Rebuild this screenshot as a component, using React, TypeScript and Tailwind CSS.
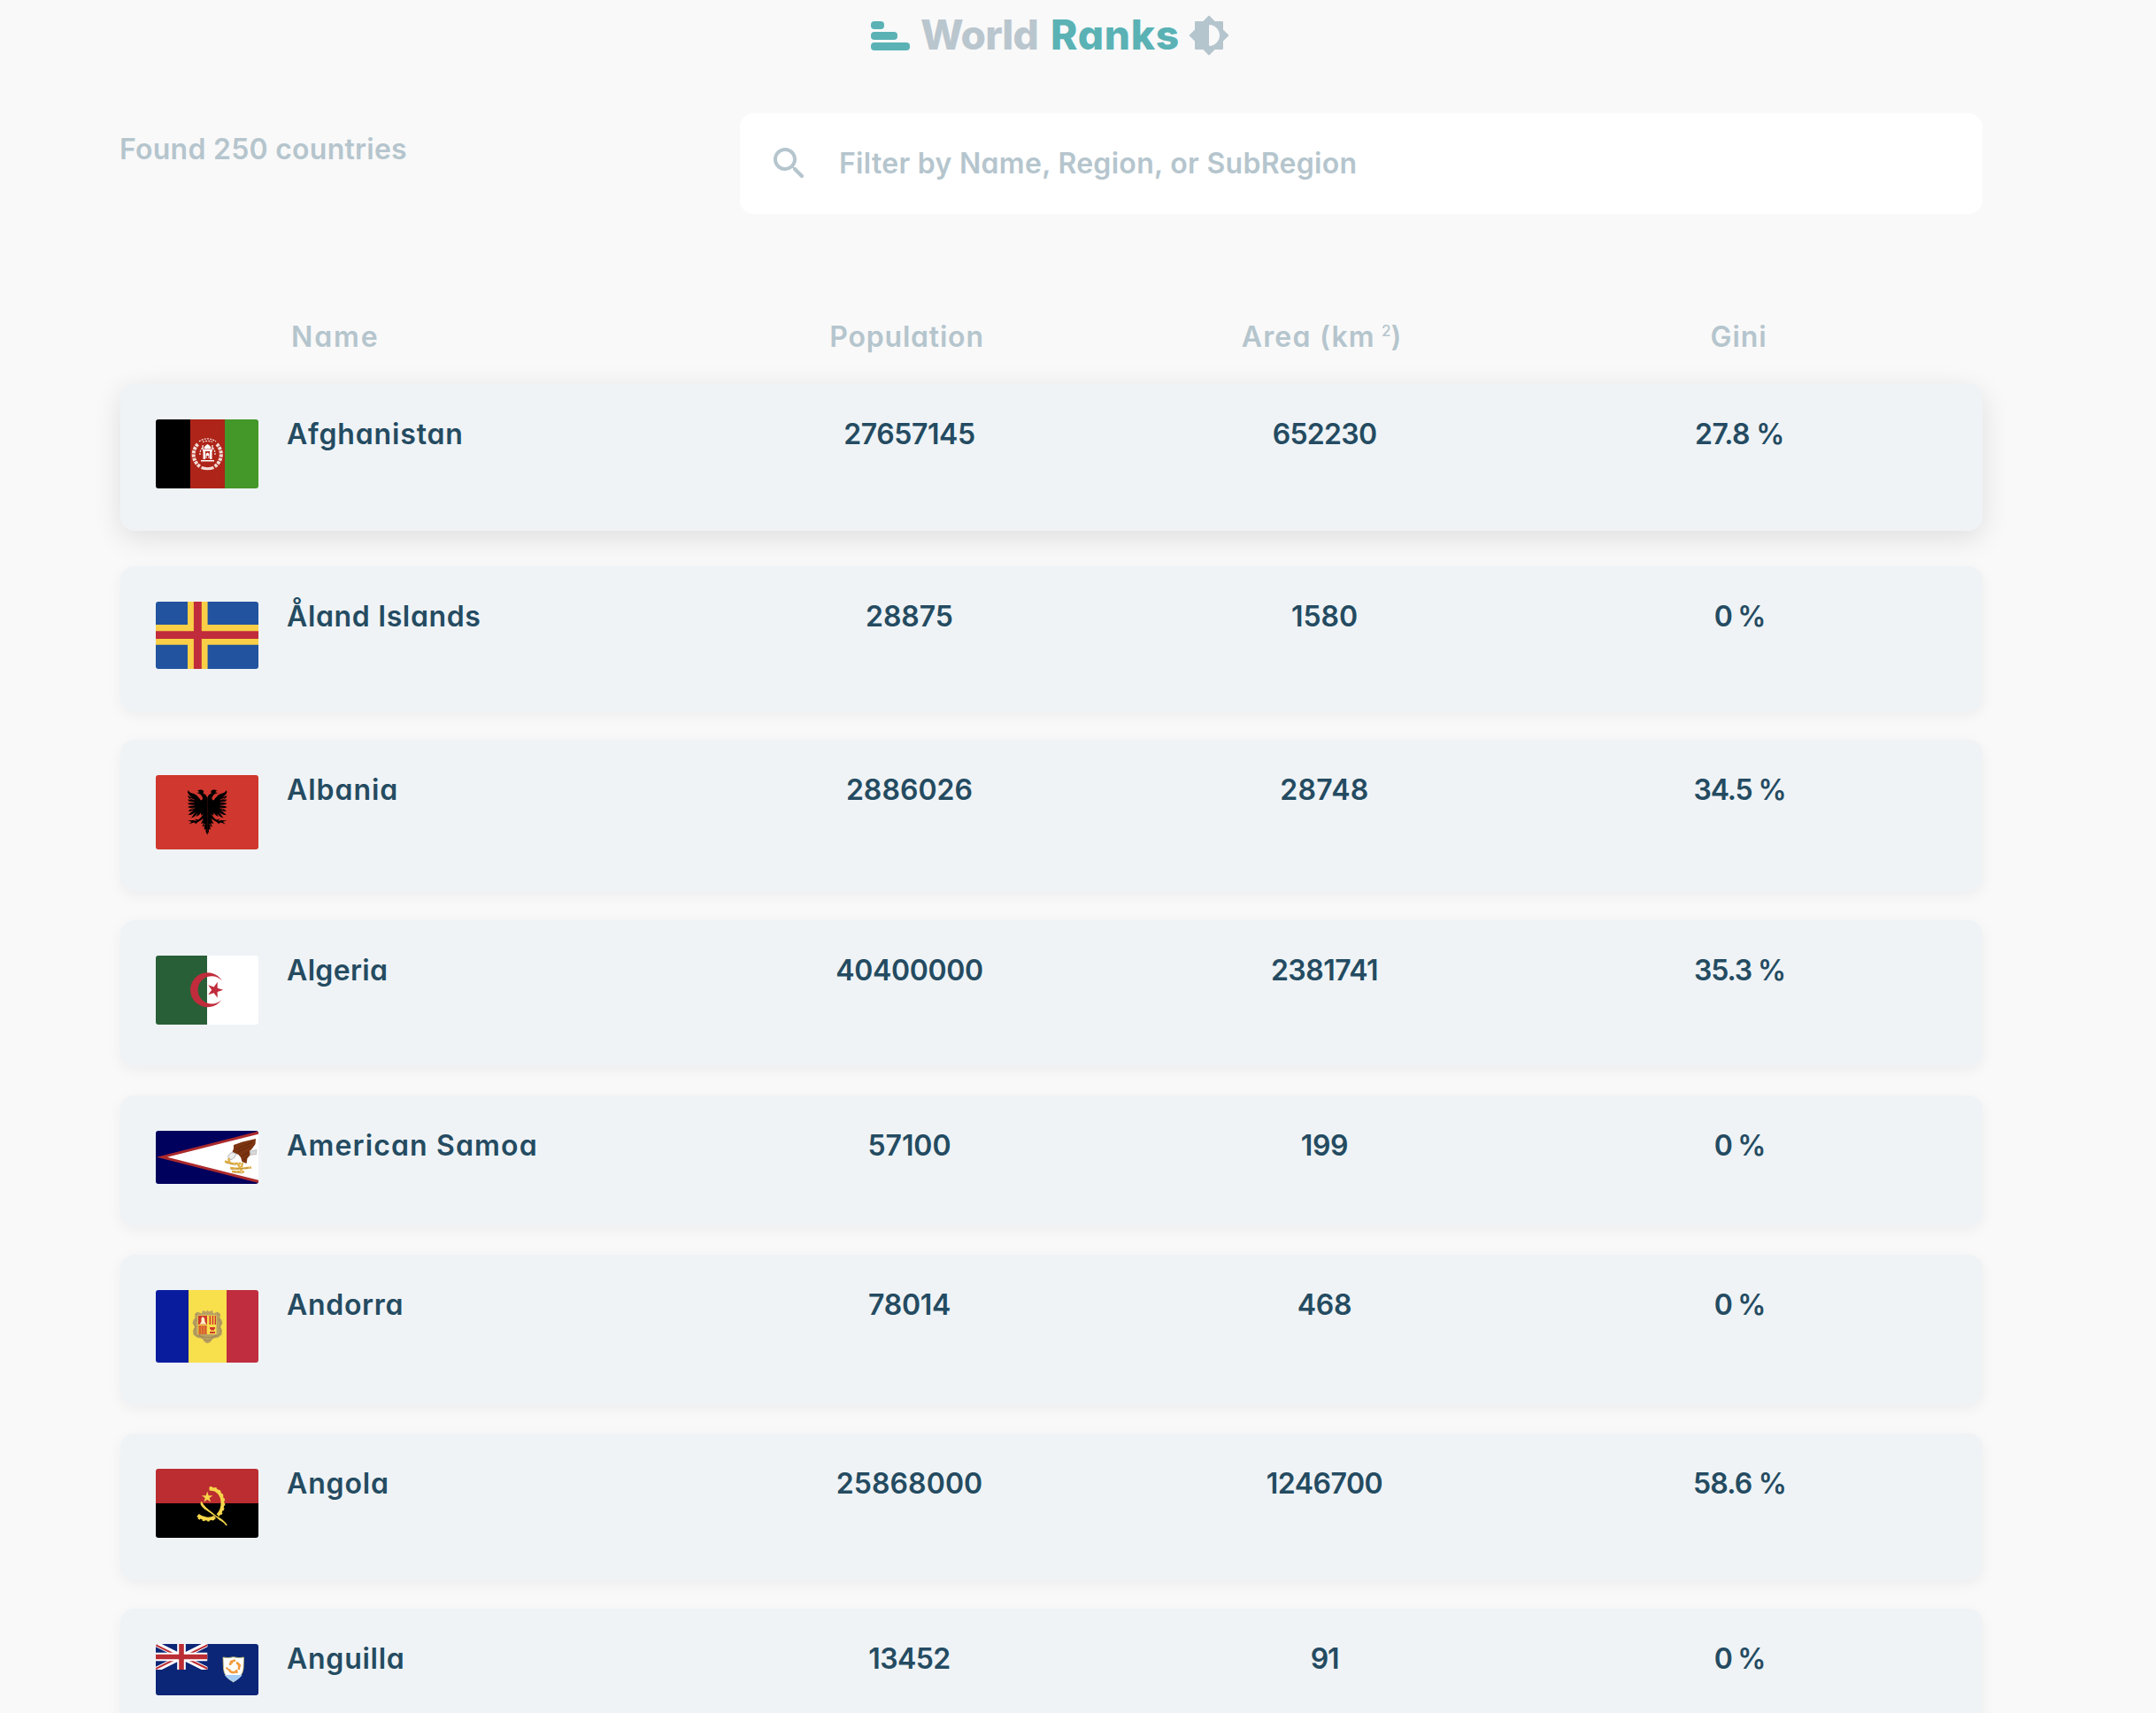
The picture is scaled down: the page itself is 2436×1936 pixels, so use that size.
import type { ReactNode } from "react";

type Country = {
  name: string;
  nameTracking: string;
  population: string;
  populationTracking: string;
  area: string;
  areaTracking: string;
  gini: string;
  giniTracking: string;
  flagHeight: number;
  flag: ReactNode;
  raised?: boolean;
};

const starPoints = (cx: number, cy: number, r: number, inner: number, start: number) =>
  Array.from({ length: 10 }, (_, i) => {
    const a = start + (i * Math.PI) / 5;
    const d = i % 2 ? inner : r;
    return `${(cx + d * Math.cos(a)).toFixed(2)},${(cy + d * Math.sin(a)).toFixed(2)}`;
  }).join(" ");

const Afghanistan = (
  <>
    <path fill="#000" d="M0 0h39v78H0z" />
    <path fill="#ae2419" d="M39 0h39v78H39z" />
    <path fill="#449729" d="M78 0h38v78H78z" />
    <g fill="none" stroke="#f3dcd6">
      <path strokeWidth="4" strokeDasharray="3.2 1" d="M47.500 28a15.500 16 0 0 0 3 25.500M69 28a15.500 16 0 0 1-3 25.500" />
      <path strokeWidth="1.300" strokeDasharray="2 1.200" d="M49 25a16 16 0 0 1 19 0M53 25.500a14 14 0 0 1 11 0M50 40a9 9 0 0 1 3-8M67 40a9 9 0 0 0-3-8" />
      <path strokeWidth="3.200" d="M51.500 54.500q7 2.500 14 0" />
    </g>
    <g fill="#fff">
      <path d="M58.500 28c-3 2-4 3-4 5.500h8c0-2.500-1-3.500-4-5.500zM53 34h11v2H53zM53.500 36h2.500v9h-2.500zM61 36h2.500v9H61zM51 46h15v1.500H51z" />
      <path d="M56.500 44v-5q2-3 4 0v5h-1v-3h-2v3z" />
      <path d="M52.500 29h1.200v5h-1.200zM63.400 29h1.200v5h-1.200z" />
    </g>
  </>
);

const Aland = (
  <>
    <path fill="#22539f" d="M0 0h116v76H0z" />
    <path fill="#f8cf46" d="M36 0h22.600v76H36zM0 26h116v22.700H0z" />
    <path fill="#c02c3b" d="M42.900 0h8.900v76h-8.900zM0 33.300h116v8.800H0z" />
  </>
);

const eagleHalf =
  "M58.200 26 C57 22 55 21 53 20.800 C54.500 19.500 54.500 18.500 53.500 17.500 C52 16 49 16 47 18 C48.500 18 49 18.500 49 19.500 L46 20 C48 20.500 50 21 51 22.500 C53 25 54 27 51.500 28.500 C50 28 50 26.500 48 25 C46 22 43 21 41 20.500 C39 20 37.500 19 36.500 17 L36 19.500 C37 22 38.500 23.500 41 25 C39 24.500 37.500 24 36 23 C36.500 25.500 38 27 41 28 L36 27.500 C37 29.500 38.500 30.500 41.500 31 L36 31.800 C37 33.500 39 34 42 33.700 L36 36 C37.500 37.500 40 37.500 42.500 36.500 L36.500 40.500 C39 41.500 41.500 40.500 43.500 39 L36.500 45 C40.500 45.500 43 43.500 45 41.500 L40 48.500 C44 47.500 46 45 47.500 42.500 L45.500 47 C48 46.500 49.500 44.500 51 42.500 L51 45.500 L53.500 44 C52.500 46.500 50 49 48 50.500 L44 49.500 L46.500 51.800 L42 51 L36 51.500 L40.500 52.800 L37.500 55.500 L43 53.500 L45.500 55 L47.500 53 C50 52 52 50 54 49 L51 55 L54 54 L52.500 58.500 L55.200 57.500 L54.500 61.500 L56.500 61 L56.500 64 L58.200 67.500 Z";

const Albania = (
  <>
    <path fill="#d0372e" d="M0 0h116v84H0z" />
    <path d={eagleHalf} />
    <path d={eagleHalf} transform="matrix(-1 0 0 1 116.400 0)" />
    <path fill="none" stroke="#d0372e" strokeWidth=".8" d="M39 26l4.500 2M39 30l4.500 1M39 34.500l4.500-.5M40 39l4-2M73 28l4.500-2M73 31l4.500-1M73 34l4.500.500M72.500 37l4 2M54 57l2-2M62.500 57l-2-2" />
  </>
);

const Algeria = (
  <>
    <path fill="#295f37" d="M0 0h58v78H0z" />
    <path fill="#fff" d="M58 0h58v78H58z" />
    <path fill="#c02c3b" d="M75.300 28.800A19.500 19.500 0 1 0 74.600 49.700A15.700 15.700 0 1 1 75.300 28.800z" />
    <polygon fill="#c02c3b" points={starPoints(66.8, 38.8, 9.4, 3.6, 0)} />
  </>
);

const AmericanSamoa = (
  <>
    <path fill="#00005d" d="M0 0h116v60H0z" />
    <path fill="#ac2a2c" d="M1 29.700 116 .500v58.500z" />
    <path fill="#fff" d="M13 29.700 116 3.800v52z" />
    <path fill="#7d3410" d="M88 16l10-3.500L113 9l-.5 6-3.500 5-3 3 1 4-3.500 4-1 6-5-2-1.500-5-2.500-3-7-3 1.500-4z" />
    <path fill="none" stroke="#55210a" strokeWidth=".7" d="M91 21l18-8M93 24l14-7M97 29l8-5M99 33l5-4" />
    <path fill="#d9d9d9" stroke="#999" strokeWidth=".5" d="M107 23l7-1.500-.5 5-7 1z" />
    <path fill="#eee" stroke="#888" strokeWidth=".6" d="M87.500 24.500c-3 0-5 2-6 5l2 1.500 1.500 2 4-3 2-4z" />
    <path fill="none" stroke="#dfae44" strokeWidth="2.400" strokeDasharray="5 .4" d="M78 34.500l8 2.500 10 0M82 31l2 6M84 42l10 1 14-1.500M86 46l14 .500M98 36l-1 5M93 38l4 7" />
    <path fill="none" stroke="#9b7426" strokeWidth=".5" d="M79 36l12 3M85 43.500l20-1.500M88 47l10 1" />
  </>
);

const Andorra = (
  <>
    <path fill="#0a1c9e" d="M0 0h37v82H0z" />
    <path fill="#f8df4c" d="M37 0h43v82H37z" />
    <path fill="#bf2d3f" d="M80 0h36v82H80z" />
    <path fill="#b9a163" d="M53 23l4 1.500 1.500-2 1.500 2 4-1.500 1 3.500 5-2 3 2.500-1.500 4 3 2.500 1 4-2.500 4 2 4-.5 5-4 3-6 1.500-3 4-3 1.200-3-1.200-3-4-6-1.500-4-3-.5-5 2-4-2.500-4 1-4 3-2.500-1.500-4 3-2.500 5 2z" />
    <path fill="none" stroke="#826d3d" strokeWidth=".7" strokeDasharray="1.500 1" d="M46 27q-3 3 0 7-4 4-1 8-3 7 2 10 5 0 8 4 3 2 7 0 3-4 8-4 5-3 2-10 3-4-1-8 3-4 0-7M49 51q10 5 20 0" />
    <path fill="#f8df4c" d="M47.500 28.500h21V50h-21z" />
    <path fill="#cf3a2c" d="M48 29h10v10H48zM60.500 29h1.600v10h-1.600zM63.600 29h1.600v10h-1.600zM66.600 29h1.400v10h-1.400z" />
    <path fill="#e08a34" d="M48 40h10v10H48z" />
    <path fill="#cf3a2c" d="M49.500 40h1v10h-1zM52.500 40h1v10h-1zM55.500 40h1v10h-1zM61 42h6v2h-1v1.500h-4V44h-1zM61 47h6v2h-6z" />
    <path fill="#fff4c8" d="M53 30l2 2 .5 4 2 2.500h-8L51.500 36v-4z" />
  </>
);

const Angola = (
  <>
    <path fill="#bb2d30" d="M0 0h116v39H0z" />
    <path d="M0 39h116v39H0z" />
    <g fill="none" stroke="#f6d64b">
      <path strokeWidth="3.800" d="M60.500 23C69 21.500 75.500 29 75.500 38.500C75.500 44 73.500 49 70 52.500M67 54.500C61 58 53 57 47.500 52.500" />
      <path strokeWidth="2.200" strokeDasharray="2.600 2.800" d="M61 21.300C70 20 77.200 29 77.200 38.500C77.200 45 75 50 71 54M66 56.700C60 59.300 52 58.800 47 54.800" />
    </g>
    <path fill="#f6d64b" d="M51 37c1.500 0 1.500 1.500 3 3.500 3.500 4.500 9 8 13.500 12 2 1.500 4 2.500 6.500 4 2.500 2 5.500 4.500 7 7.500h-2c-1-2.500-4-4.500-7-6-3-3-6-5-9.500-7.500-5-3.500-10-6-12-10.500z" />
    <path fill="none" stroke="#7b6a20" strokeWidth=".7" d="M62 50.500l8 5.500" />
    <polygon fill="#f6d64b" points={starPoints(58.2, 32.2, 6.6, 2.5, -Math.PI / 2)} />
  </>
);

const Anguilla = (
  <>
    <path fill="#0b2577" d="M0 0h116v58H0z" />
    <svg width="58.500" height="29" viewBox="0 0 58.500 29">
      <path stroke="#fff" strokeWidth="6" d="M0 0l58.500 29M58.500 0L0 29" />
      <path stroke="#bb2d34" strokeWidth="2" d="M0 1.200l29 14.500M58.500 1.200L29 15.700M0 28l29-14.500M58.500 28L29 13.500" />
      <path stroke="#fff" strokeWidth="9.600" d="M29 0v29M0 14.500h58.500" />
      <path stroke="#bb2d34" strokeWidth="5.600" d="M29 0v29M0 14.500h58.500" />
    </svg>
    <path fill="#fff" stroke="#c9c26a" strokeWidth=".8" d="M76 15q6 1.500 11.700-.3Q94 16.500 99.500 15l-.5 13q-1 9-11.300 15Q77 37 76.500 28z" />
    <path fill="#a6cdf5" d="M77.800 35h19.800q-3 5-9.900 7.700Q81 40 77.800 35z" />
    <g fill="none" stroke="#f29a3c" strokeWidth="2.600">
      <path d="M84 24q0-5 6-5.500M91 21q5 2 2.500 8M92 30q-4 4.500-9 0" />
      <path strokeWidth="1.800" d="M79.500 26.500q2 3 5 3M84.500 19l2 3M94 23l2 2M91 29l1 4" />
    </g>
  </>
);

const countries: Country[] = [
  { name: "Afghanistan", nameTracking: "tracking-[0.850px]", population: "27657145", populationTracking: "tracking-[-0.450px]", area: "652230", areaTracking: "tracking-[-0.700px]", gini: "27.8 %", giniTracking: "tracking-[-0.600px]", flagHeight: 78, flag: Afghanistan, raised: true },
  { name: "Åland Islands", nameTracking: "tracking-[0.650px]", population: "28875", populationTracking: "tracking-[-0.050px]", area: "1580", areaTracking: "tracking-[-0.050px]", gini: "0 %", giniTracking: "tracking-[-1.300px]", flagHeight: 76, flag: Aland },
  { name: "Albania", nameTracking: "tracking-[0.950px]", population: "2886026", populationTracking: "tracking-[0.050px]", area: "28748", areaTracking: "tracking-[0.300px]", gini: "34.5 %", giniTracking: "tracking-[-1.150px]", flagHeight: 84, flag: Albania },
  { name: "Algeria", nameTracking: "tracking-[0.350px]", population: "40400000", populationTracking: "tracking-[-0.350px]", area: "2381741", areaTracking: "tracking-[-0.500px]", gini: "35.3 %", giniTracking: "tracking-[-1.150px]", flagHeight: 78, flag: Algeria },
  { name: "American Samoa", nameTracking: "tracking-[1.150px]", population: "57100", populationTracking: "tracking-[-0.100px]", area: "199", areaTracking: "tracking-[-0.400px]", gini: "0 %", giniTracking: "tracking-[-1.300px]", flagHeight: 60, flag: AmericanSamoa },
  { name: "Andorra", nameTracking: "tracking-[0.700px]", population: "78014", populationTracking: "tracking-[-0.250px]", area: "468", areaTracking: "tracking-[-0.300px]", gini: "0 %", giniTracking: "tracking-[-1.300px]", flagHeight: 82, flag: Andorra },
  { name: "Angola", nameTracking: "tracking-[0.850px]", population: "25868000", populationTracking: "tracking-[0.100px]", area: "1246700", areaTracking: "tracking-[-0.500px]", gini: "58.6 %", giniTracking: "tracking-[-0.800px]", flagHeight: 78, flag: Angola },
  { name: "Anguilla", nameTracking: "tracking-[0.750px]", population: "13452", populationTracking: "tracking-[-0.600px]", area: "91", areaTracking: "tracking-[-1.300px]", gini: "0 %", giniTracking: "tracking-[-1.300px]", flagHeight: 58, flag: Anguilla },
];

const rowGrid = "grid grid-cols-[148px_repeat(4,1fr)] px-10";

function Logo() {
  return (
    <header className="flex h-20 items-center pl-[984px]">
      <div className="flex w-11 flex-col gap-[3px]">
        <span className="h-[9px] w-[15px] rounded-[4px] bg-[#5ab2b5]" />
        <span className="h-[9px] w-[30px] rounded-[4px] bg-[#5ab2b5]" />
        <span className="h-[9px] w-11 rounded-[4px] bg-[#5ab2b5]" />
      </div>
      <h1 className="ml-3 flex w-[302px] gap-[14px] pb-0.5 text-[46px] leading-[56px] font-extrabold">
        <span className="tracking-[-0.870px] text-[#bac6ce]">World</span>
        <span className="tracking-[0.750px] text-[#5ab2b5]">Ranks</span>
      </h1>
      <svg className="size-12" viewBox="0 0 24 24" fill="#b5c5cd">
        <path d="M20 15.310l2.950-2.950a.5.5 0 0 0 0-.720L20 8.690V4.600a.6.6 0 0 0-.6-.6h-4.090l-2.950-2.950a.5.5 0 0 0-.720 0L8.690 4H4.600a.6.6 0 0 0-.6.6v4.090l-2.950 2.950a.5.5 0 0 0 0 .720L4 15.310v4.090a.6.6 0 0 0 .6.6h4.090l2.950 2.950a.5.5 0 0 0 .720 0L15.310 20h4.090a.6.6 0 0 0 .6-.6zM12 17.400V6.600q0-.600.600-.600C15.600 6.300 18 8.900 18 12s-2.400 5.700-5.400 6q-.6 0-.6-.6z" />
      </svg>
    </header>
  );
}

function SearchBar() {
  return (
    <label className="flex h-[114px] w-[1404px] items-center rounded-2xl bg-white pl-8">
      <svg className="size-12" viewBox="0 0 24 24" fill="#b5c5cd">
        <path d="M15.500 14h-.79l-.28-.27a6.500 6.500 0 0 0 1.480-5.340c-.47-2.780-2.790-5-5.590-5.340a6.505 6.505 0 0 0-7.270 7.270c.34 2.800 2.560 5.120 5.340 5.590a6.500 6.500 0 0 0 5.340-1.480l.27.28v.79l4.250 4.250c.41.41 1.080.41 1.490 0 .41-.41.41-1.080 0-1.490L15.500 14zm-6 0C7.010 14 5 11.990 5 9.500S7.010 5 9.500 5 14 7.010 14 9.500 11.990 14 9.500 14z" />
      </svg>
      <span className="ml-8 tracking-[0.300px]">Filter by Name, Region, or SubRegion</span>
    </label>
  );
}

function CountryRow({ c }: { c: Country }) {
  return (
    <li
      className={
        rowGrid +
        " rounded-2xl bg-[#eff3f6] pt-[33px] text-[#244b61] " +
        (c.raised
          ? "mb-2 shadow-[0_8px_32px_rgba(0,0,0,0.11)]"
          : "shadow-[0_4px_16px_rgba(0,0,0,0.05)]")
      }
    >
      <svg
        className="mt-[7px] mb-12 w-[116px] rounded-[3px]"
        height={c.flagHeight}
        viewBox={`0 0 116 ${c.flagHeight}`}
      >
        {c.flag}
      </svg>
      <span className={c.nameTracking}>{c.name}</span>
      <span className={"text-center " + c.populationTracking}>{c.population}</span>
      <span className={"text-center " + c.areaTracking}>{c.area}</span>
      <span className={"text-center " + c.giniTracking}>{c.gini}</span>
    </li>
  );
}

export default function App() {
  return (
    <div className="h-[1936px] w-[2436px] overflow-hidden bg-[#f9f9f9] font-['Inter',sans-serif] text-[32px] leading-[48px] font-[560] [font-feature-settings:'cv11']">
      <Logo />
      <main className="ml-[136px] w-[2104px] pt-12">
        <div className="flex items-start justify-between text-[#b5c5cd]">
          <p className="-ml-px pt-[17px] tracking-[0.250px]">Found 250 countries</p>
          <SearchBar />
        </div>
        <div className={rowGrid + " mt-[115px] mb-[29px] text-[#b5c5cd]"}>
          <span />
          <span className="pl-[5px] tracking-[1.900px]">Name</span>
          <span className="pr-1.5 text-center tracking-[0.800px]">Population</span>
          <span className="flex justify-center pr-[7px]">
            <span className="tracking-[1.200px]">Area (km</span>
            <span className="ml-[7px] pt-px text-[17px] leading-[32px] font-medium">2</span>
            <span>)</span>
          </span>
          <span className="pr-0.5 text-center tracking-[0.900px]">Gini</span>
        </div>
        <ul className="flex flex-col gap-8">
          {countries.map((c) => (
            <CountryRow key={c.name} c={c} />
          ))}
        </ul>
      </main>
    </div>
  );
}
